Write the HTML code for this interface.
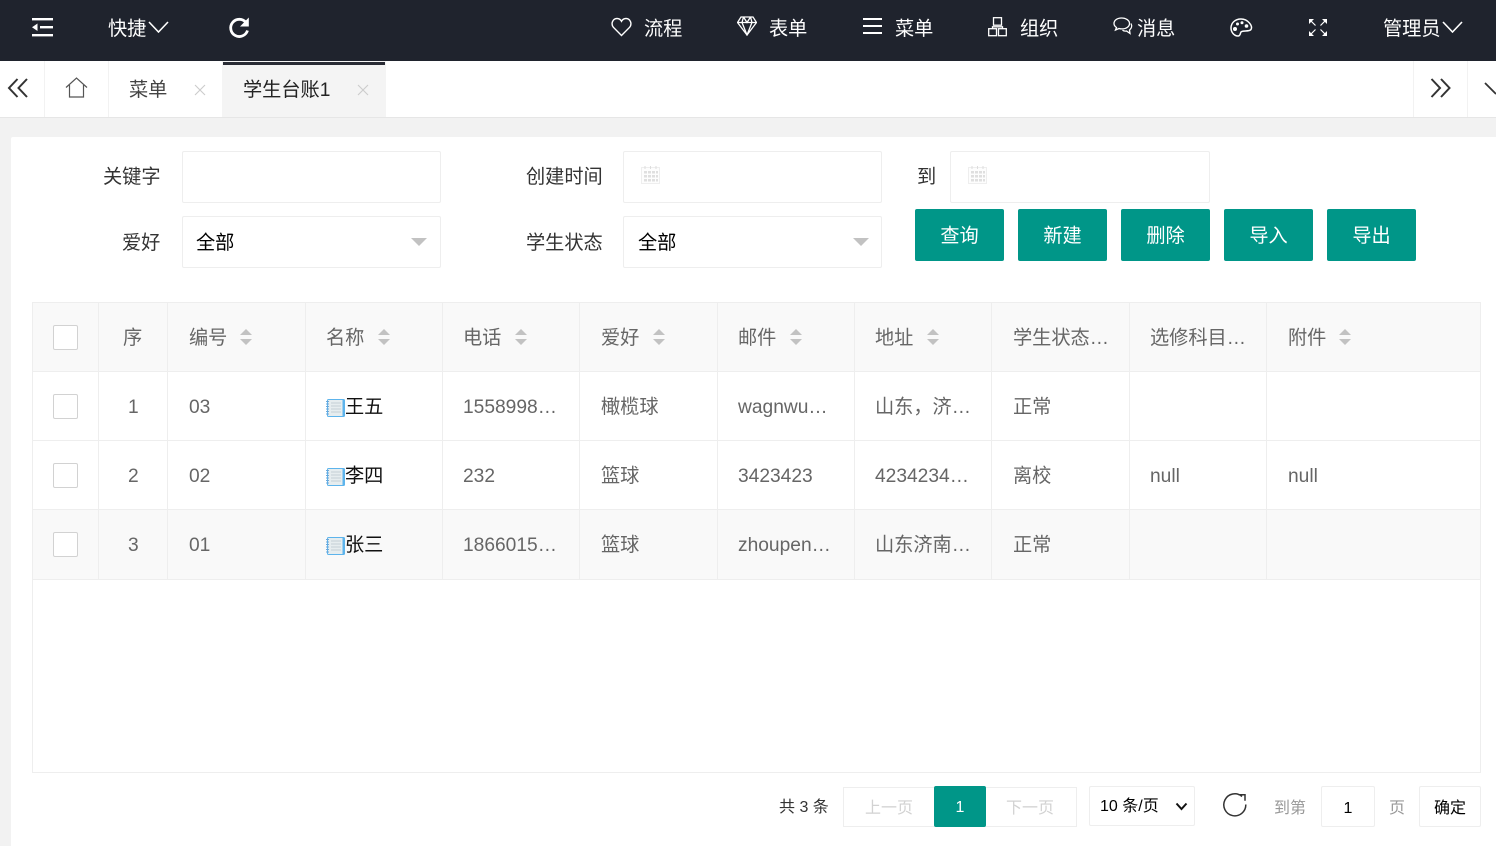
<!DOCTYPE html>
<html><head><meta charset="utf-8">
<style>
html,body{margin:0;padding:0;width:1496px;height:846px;overflow:hidden;background:#f2f2f2;font-family:"Liberation Sans","Noto Sans CJK SC",sans-serif;font-size:19.2px;color:#666}
div,span,svg{position:absolute;box-sizing:border-box}
.t{white-space:nowrap;line-height:26px;height:26px}
.top{color:#fff}
.lab{color:#333}
.box{background:#fff;border:1px solid #eee;border-radius:2px}
.btn{background:#009688;color:#fff;border-radius:2px;width:89px;height:52px;top:209px;text-align:center;line-height:56px}
.v{background:#eee;width:1px;top:302px;height:470px}
.h{background:#eee;height:1px;left:32px;width:1449px}
.cb{width:25px;height:25px;left:53px;background:#fff;border:1px solid #d2d2d2;border-radius:2px}
.up{width:0;height:0;border:6.5px solid transparent;border-top:0;border-bottom:6.5px solid #c2c2c2}
.dn{width:0;height:0;border:6.5px solid transparent;border-bottom:0;border-top:6.5px solid #c2c2c2}
.blk{color:#111}
</style></head><body>
<div style="left:0;top:0;width:1496px;height:61px;background:#1f232d"></div>
<!-- top left -->
<svg style="left:32px;top:18px" width="21" height="19" viewBox="0 0 21 19" fill="#fff"><rect width="21" height="2.4"/><rect x="8" y="8" width="13" height="2.4"/><rect y="16" width="21" height="2.4"/><path d="M0 9.200L5.500 5.500V13z"/></svg>
<span class="t top" style="left:108px;top:17px">快捷</span>
<svg style="left:148px;top:20px" width="21" height="14" fill="none" stroke="#fff" stroke-width="1.6"><path d="M1 2l9.500 10L20 2"/></svg>
<svg style="left:228px;top:16px" width="22" height="23" viewBox="0 0 22 23" fill="none"><path d="M18 6.500A8.600 8.600 0 1 0 19.500 14.500" stroke="#fff" stroke-width="2.800"/><path d="M20.800 1.500V10.500H12z" fill="#fff"/></svg>
<!-- top right -->
<svg style="left:611px;top:17px" width="21" height="20" viewBox="0 0 21 20" fill="none" stroke="#fff" stroke-width="1.400"><path d="M10.500 18.500L2.300 10.200C-.5 6.500 2 1.500 6 1.500c2 0 3.500 1 4.500 2.800C11.500 2.500 13 1.500 15 1.500c4 0 6.500 5 3.700 8.700z"/></svg>
<span class="t top" style="left:644px;top:17px">流程</span>
<svg style="left:737px;top:16px" width="20" height="20" viewBox="0 0 20 20" fill="none" stroke="#fff" stroke-width="1.300"><path d="M4 1h12l3.500 5.500L10 19 .5 6.500zM.5 6.500h19M6.500 1L5 6.500 10 19l5-12.500L13.500 1M6.500 1L10 6.500 13.500 1"/></svg>
<span class="t top" style="left:769px;top:17px">表单</span>
<svg style="left:863px;top:18px" width="19" height="16" fill="#fff"><rect width="19" height="2"/><rect y="7" width="19" height="2"/><rect y="14" width="19" height="2"/></svg>
<span class="t top" style="left:895px;top:17px">菜单</span>
<svg style="left:988px;top:17px" width="19" height="20" viewBox="0 0 19 20" fill="none" stroke="#fff" stroke-width="1.300"><rect x="5.500" y=".7" width="8" height="7.500"/><rect x=".7" y="11.700" width="7.800" height="7"/><rect x="10.500" y="11.700" width="7.800" height="7"/><path d="M4.500 11.700V9.800h10v1.900"/></svg>
<span class="t top" style="left:1020px;top:17px">组织</span>
<svg style="left:1113px;top:17px" width="20" height="18" viewBox="0 0 20 18" fill="none" stroke="#fff" stroke-width="1.300"><path d="M8.500 1C4 1 1 3.500 1 6.500c0 1.700 1 3 2.500 4L2.500 13l3.500-1.500c1 .3 1.800.4 2.800.4 4.500 0 7.700-2.300 7.700-5.400S13 1 8.500 1z"/><path d="M18 6.500c1.300 2.500.5 5-1.500 6.500l.5 3.500-3.500-2.500c-1.500.3-3 0-4-1"/></svg>
<span class="t top" style="left:1137px;top:17px">消息</span>
<svg style="left:1230px;top:18px" width="23" height="19" viewBox="0 0 23 19" fill="none" stroke="#fff" stroke-width="1.500"><path d="M11 1C5 1 1 5 1 10c0 4 3 8 7 8 2.500 0 2-2.500 3-4 1.500-2 8 0 10-2.500C23 8 18 1 11 1z"/><g fill="#fff" stroke="none"><circle cx="5" cy="11" r="2"/><circle cx="7.500" cy="6" r="1.500"/><circle cx="12" cy="4.800" r="1.500"/><circle cx="16.500" cy="8" r="1.800"/></g></svg>
<svg style="left:1309px;top:19px" width="18" height="17" viewBox="0 0 18 17" fill="#fff" stroke="none"><path d="M0 0h5L0 5zM18 0h-5l5 5zM0 17h5L0 12zM18 17h-5l5-5z"/><path d="M2 2l4.500 4.500M16 2l-4.500 4.500M2 15l4.500-4.500M16 15l-4.500-4.500" fill="none" stroke="#fff" stroke-width="1.200"/></svg>
<span class="t top" style="left:1383px;top:17px">管理员</span>
<svg style="left:1442px;top:20px" width="21" height="14" fill="none" stroke="#fff" stroke-width="1.600"><path d="M1 2l9.500 10L20 2"/></svg>
<!-- tabs -->
<div style="left:0;top:61px;width:1496px;height:57px;background:#fff;border-bottom:1px solid #e6e6e6"></div>
<div style="left:44px;top:61px;width:1px;height:56px;background:#f2f2f2"></div>
<div style="left:108px;top:61px;width:1px;height:56px;background:#f2f2f2"></div>
<div style="left:1413px;top:61px;width:1px;height:56px;background:#f2f2f2"></div>
<div style="left:1467px;top:61px;width:1px;height:56px;background:#f2f2f2"></div>
<svg style="left:7px;top:78px" width="22" height="20" fill="none" stroke="#333" stroke-width="2"><path d="M10.500 1L2 10l8.500 9M20 1l-8.500 9 8.500 9"/></svg>
<svg style="left:65px;top:77px" width="24" height="21" viewBox="0 0 24 21" fill="none" stroke="#555" stroke-width="1.200"><path d="M1 10.500L11.500 1 22 10.500M4.500 8v12h14V8"/></svg>
<span class="t" style="left:129px;top:78px;color:#444">菜单</span>
<svg style="left:194px;top:84px" width="12" height="12" stroke="#ccc" stroke-width="1.100"><path d="M1 1l10 10M11 1L1 11"/></svg>
<div style="left:222px;top:61px;width:164px;height:56px;background:#f4f4f4"></div>
<div style="left:223px;top:62px;width:162px;height:3px;background:#292b34"></div>
<span class="t" style="left:243px;top:78px;color:#222">学生台账1</span>
<svg style="left:357px;top:84px" width="12" height="12" stroke="#ccc" stroke-width="1.100"><path d="M1 1l10 10M11 1L1 11"/></svg>
<svg style="left:1430px;top:78px" width="22" height="20" fill="none" stroke="#333" stroke-width="2"><path d="M1.500 1L10 10l-8.500 9M11 1l8.500 9-8.500 9"/></svg>
<svg style="left:1484px;top:80px" width="12" height="16" fill="none" stroke="#333" stroke-width="1.800"><path d="M1 3l11 11"/></svg>
<!-- panel -->
<div style="left:11px;top:137px;width:1485px;height:709px;background:#fff;border-radius:2px 0 0 0"></div>
<span class="t lab" style="left:103px;top:165px">关键字</span>
<div class="box" style="left:182px;top:151px;width:259px;height:52px"></div>
<span class="t lab" style="left:526px;top:165px">创建时间</span>
<div class="box" style="left:623px;top:151px;width:259px;height:52px"></div>
<svg style="left:641px;top:166px" width="20" height="18" viewBox="0 0 20 18"><rect x=".5" y="1.500" width="18" height="16" fill="#fdfdfd" stroke="#eee"/><path d="M4 0v3M9.500 0v3M15 0v3" stroke="#ddd"/><g fill="#dfdfdf"><rect x="3" y="5" width="3" height="2.500"/><rect x="7" y="5" width="3" height="2.500"/><rect x="11" y="5" width="3" height="2.500"/><rect x="15" y="5" width="2" height="2.500"/><rect x="3" y="9" width="3" height="2.500"/><rect x="7" y="9" width="3" height="2.500"/><rect x="11" y="9" width="3" height="2.500"/><rect x="15" y="9" width="2" height="2.500"/><rect x="3" y="13" width="3" height="2.500"/><rect x="7" y="13" width="3" height="2.500"/><rect x="11" y="13" width="3" height="2.500"/><rect x="15" y="13" width="2" height="2.500"/></g></svg>
<span class="t lab" style="left:917px;top:165px">到</span>
<div class="box" style="left:950px;top:151px;width:260px;height:52px"></div>
<svg style="left:968px;top:166px" width="20" height="18" viewBox="0 0 20 18"><rect x=".5" y="1.500" width="18" height="16" fill="#fdfdfd" stroke="#eee"/><path d="M4 0v3M9.500 0v3M15 0v3" stroke="#ddd"/><g fill="#dfdfdf"><rect x="3" y="5" width="3" height="2.500"/><rect x="7" y="5" width="3" height="2.500"/><rect x="11" y="5" width="3" height="2.500"/><rect x="15" y="5" width="2" height="2.500"/><rect x="3" y="9" width="3" height="2.500"/><rect x="7" y="9" width="3" height="2.500"/><rect x="11" y="9" width="3" height="2.500"/><rect x="15" y="9" width="2" height="2.500"/><rect x="3" y="13" width="3" height="2.500"/><rect x="7" y="13" width="3" height="2.500"/><rect x="11" y="13" width="3" height="2.500"/><rect x="15" y="13" width="2" height="2.500"/></g></svg>
<span class="t lab" style="left:122px;top:231px">爱好</span>
<div class="box" style="left:182px;top:216px;width:259px;height:52px"></div>
<span class="t" style="left:196px;top:231px;color:#000">全部</span>
<div class="dn" style="left:411px;top:238px;border-width:8px;border-top-color:#c2c2c2;border-bottom:0"></div>
<span class="t lab" style="left:526px;top:231px">学生状态</span>
<div class="box" style="left:623px;top:216px;width:259px;height:52px"></div>
<span class="t" style="left:638px;top:231px;color:#000">全部</span>
<div class="dn" style="left:853px;top:238px;border-width:8px;border-top-color:#c2c2c2;border-bottom:0"></div>
<div class="btn" style="left:915px">查询</div>
<div class="btn" style="left:1018px">新建</div>
<div class="btn" style="left:1121px">删除</div>
<div class="btn" style="left:1224px">导入</div>
<div class="btn" style="left:1327px">导出</div>
<!-- table -->
<div style="left:32px;top:302px;width:1449px;height:471px;background:#fff;border:1px solid #eee"></div>
<div style="left:33px;top:303px;width:1447px;height:68px;background:#f9f9f9"></div>
<div style="left:33px;top:510px;width:1447px;height:69px;background:#f9f9f9"></div>
<div class="h" style="top:371px"></div><div class="h" style="top:440px"></div><div class="h" style="top:509px"></div><div class="h" style="top:579px"></div>
<div class="v" style="left:98px;height:277px"></div><div class="v" style="left:167px;height:277px"></div><div class="v" style="left:305px;height:277px"></div><div class="v" style="left:442px;height:277px"></div><div class="v" style="left:579px;height:277px"></div><div class="v" style="left:717px;height:277px"></div><div class="v" style="left:854px;height:277px"></div><div class="v" style="left:991px;height:277px"></div><div class="v" style="left:1129px;height:277px"></div><div class="v" style="left:1266px;height:277px"></div>
<div class="cb" style="top:325px"></div><div class="cb" style="top:394px"></div><div class="cb" style="top:463px"></div><div class="cb" style="top:532px"></div>
<!-- header -->
<span class="t" style="left:123px;top:326px">序</span>
<span class="t" style="left:189px;top:326px">编号</span><div class="up" style="left:240px;top:329px"></div><div class="dn" style="left:240px;top:339px"></div>
<span class="t" style="left:326px;top:326px">名称</span><div class="up" style="left:378px;top:329px"></div><div class="dn" style="left:378px;top:339px"></div>
<span class="t" style="left:463px;top:326px">电话</span><div class="up" style="left:515px;top:329px"></div><div class="dn" style="left:515px;top:339px"></div>
<span class="t" style="left:601px;top:326px">爱好</span><div class="up" style="left:653px;top:329px"></div><div class="dn" style="left:653px;top:339px"></div>
<span class="t" style="left:738px;top:326px">邮件</span><div class="up" style="left:790px;top:329px"></div><div class="dn" style="left:790px;top:339px"></div>
<span class="t" style="left:875px;top:326px">地址</span><div class="up" style="left:927px;top:329px"></div><div class="dn" style="left:927px;top:339px"></div>
<span class="t" style="left:1013px;top:326px">学生状态…</span>
<span class="t" style="left:1150px;top:326px">选修科目…</span>
<span class="t" style="left:1288px;top:326px">附件</span><div class="up" style="left:1339px;top:329px"></div><div class="dn" style="left:1339px;top:339px"></div>
<!-- row 1 -->
<span class="t" style="left:128px;top:395px">1</span>
<span class="t" style="left:189px;top:395px">03</span>
<svg style="left:326px;top:399px" width="19" height="18" viewBox="0 0 19 18"><rect x="1" y="0" width="18" height="18" rx="1.500" fill="#5db4ec"/><rect x="2" y="1" width="14.500" height="16" fill="#e6edef"/><path d="M5 4h10M5 7h10M5 10h10M5 13h10" stroke="#c4d0d4"/><path d="M0 2.500h3M0 5h3M0 7.500h3M0 10h3M0 12.500h3M0 15h3" stroke="#6aa8dc"/></svg>
<span class="t blk" style="left:345px;top:395px">王五</span>
<span class="t" style="left:463px;top:395px">1558998…</span>
<span class="t" style="left:601px;top:395px">橄榄球</span>
<span class="t" style="left:738px;top:395px">wagnwu…</span>
<span class="t" style="left:875px;top:395px">山东，济…</span>
<span class="t" style="left:1013px;top:395px">正常</span>
<!-- row 2 -->
<span class="t" style="left:128px;top:464px">2</span>
<span class="t" style="left:189px;top:464px">02</span>
<svg style="left:326px;top:468px" width="19" height="18" viewBox="0 0 19 18"><rect x="1" y="0" width="18" height="18" rx="1.500" fill="#5db4ec"/><rect x="2" y="1" width="14.500" height="16" fill="#e6edef"/><path d="M5 4h10M5 7h10M5 10h10M5 13h10" stroke="#c4d0d4"/><path d="M0 2.500h3M0 5h3M0 7.500h3M0 10h3M0 12.500h3M0 15h3" stroke="#6aa8dc"/></svg>
<span class="t blk" style="left:345px;top:464px">李四</span>
<span class="t" style="left:463px;top:464px">232</span>
<span class="t" style="left:601px;top:464px">篮球</span>
<span class="t" style="left:738px;top:464px">3423423</span>
<span class="t" style="left:875px;top:464px">4234234…</span>
<span class="t" style="left:1013px;top:464px">离校</span>
<span class="t" style="left:1150px;top:464px">null</span>
<span class="t" style="left:1288px;top:464px">null</span>
<!-- row 3 -->
<span class="t" style="left:128px;top:533px">3</span>
<span class="t" style="left:189px;top:533px">01</span>
<svg style="left:326px;top:537px" width="19" height="18" viewBox="0 0 19 18"><rect x="1" y="0" width="18" height="18" rx="1.500" fill="#5db4ec"/><rect x="2" y="1" width="14.500" height="16" fill="#e6edef"/><path d="M5 4h10M5 7h10M5 10h10M5 13h10" stroke="#c4d0d4"/><path d="M0 2.500h3M0 5h3M0 7.500h3M0 10h3M0 12.500h3M0 15h3" stroke="#6aa8dc"/></svg>
<span class="t blk" style="left:345px;top:533px">张三</span>
<span class="t" style="left:463px;top:533px">1866015…</span>
<span class="t" style="left:601px;top:533px">篮球</span>
<span class="t" style="left:738px;top:533px">zhoupen…</span>
<span class="t" style="left:875px;top:533px">山东济南…</span>
<span class="t" style="left:1013px;top:533px">正常</span>
<!-- pagination -->
<span class="t" style="left:779px;top:795px;font-size:16px;color:#333">共 3 条</span>
<div style="left:843px;top:787px;width:234px;height:40px;border:1px solid #eee"></div>
<span class="t" style="left:865px;top:796px;font-size:16px;color:#d2d2d2">上一页</span>
<div style="left:934px;top:786px;width:52px;height:41px;background:#009688;border-radius:2px;color:#fff;text-align:center;line-height:43px;font-size:16px">1</div>
<span class="t" style="left:1006px;top:796px;font-size:16px;color:#d2d2d2">下一页</span>
<div class="box" style="left:1089px;top:786px;width:106px;height:40px"></div>
<span class="t" style="left:1100px;top:794px;font-size:16px;color:#000">10 条/页</span>
<svg style="left:1175px;top:802px" width="13" height="9" fill="none" stroke="#111" stroke-width="2"><path d="M1.500 1.500L6.500 7l5-5.500"/></svg>
<svg style="left:1222px;top:791px" width="26" height="26" viewBox="0 0 26 26" fill="none" stroke="#333" stroke-width="1.500"><path d="M20 5.500A11 11 0 1 0 23.800 13.500"/><path d="M16.500 3.800h6.500v6"/></svg>
<span class="t" style="left:1274px;top:796px;font-size:16px;color:#999">到第</span>
<div class="box" style="left:1321px;top:786px;width:54px;height:41px;color:#000;text-align:center;line-height:43px;font-size:16px">1</div>
<span class="t" style="left:1389px;top:796px;font-size:16px;color:#999">页</span>
<div class="box" style="left:1419px;top:786px;width:62px;height:41px;color:#000;text-align:center;line-height:43px;font-size:16px">确定</div>
</body></html>
